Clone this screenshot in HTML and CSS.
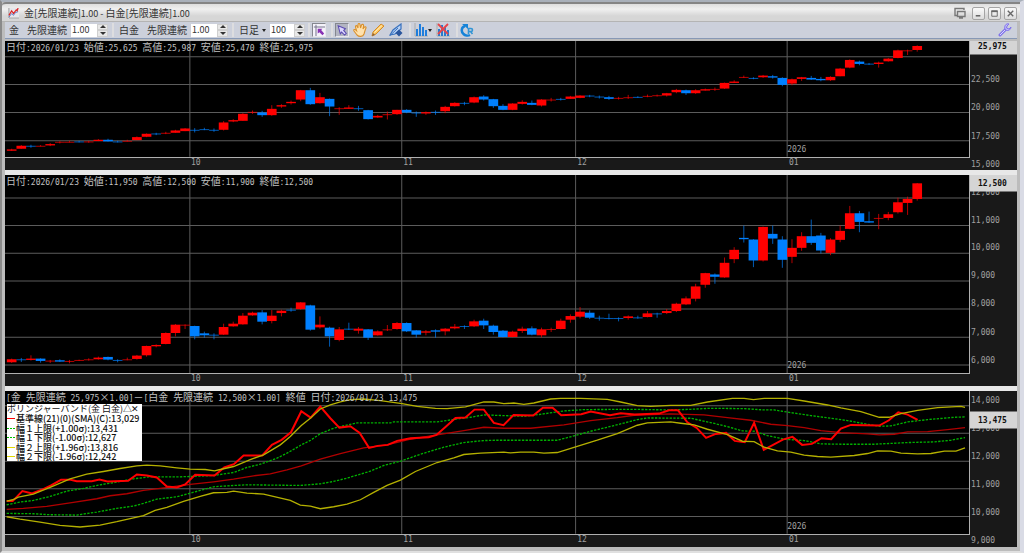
FILE: index.html
```html
<!DOCTYPE html>
<html lang="ja">
<head>
    <meta charset="UTF-8">
    <meta name="viewport" content="width=device-width, initial-scale=1.0">
    <title>金[先限連続]1.00 - 白金[先限連続]1.00</title>
    <link rel="stylesheet" href="styles.css">
</head>
<body>
    <div class="window">
        <header class="title-bar">
            <svg class="app-icon" viewBox="0 0 12 12" aria-hidden="true">
                <path d="M0 0H12V12H0Z" fill="#e6e6ea"/>
                <path d="M1 0V11H12" fill="none" stroke="#999" stroke-width="1"/>
                <path d="M1 10L4 6L6 8L8 5L11 4" fill="none" stroke="#5577cc" stroke-width="1"/>
                <path d="M1 8L4 3L6 6L9 2L10 3L11 0" fill="none" stroke="#dd2222" stroke-width="1.3"/>
            </svg>
            <h1>金[先限連続]<span>1.00 - </span>白金[先限連続]<span>1.00</span></h1>
            <button class="float-button" aria-label="切り離し">
                <svg viewBox="0 0 12 12"><path d="M3 8.500H1V1.500H10V3M3.500 4.500H11V9.500H3.500ZM5 11H9" fill="none" stroke="#777" stroke-width="1.400"/></svg>
            </button>
            <div class="window-buttons">
                <button aria-label="最小化"><svg viewBox="0 0 12 12"><path d="M3 8.500H8" stroke="#555" stroke-width="1.500"/></svg></button>
                <button aria-label="最大化"><svg viewBox="0 0 12 12"><path d="M3 3.500H9V9H3Z" fill="none" stroke="#666" stroke-width="1"/><path d="M2.500 3.500H9.500" stroke="#666" stroke-width="2"/></svg></button>
                <button aria-label="閉じる"><svg viewBox="0 0 12 12"><path d="M3 3L9 9M9 3L3 9" stroke="#666" stroke-width="1.500"/></svg></button>
            </div>
        </header>

        <div class="toolbar">
            <div class="tool-group">
                <span>金</span>
                <label for="goldRate">先限連続</label>
                <span class="spin-box">
                    <input type="text" id="goldRate" value="1.00">
                    <span class="spin"><button aria-label="増やす" class="up"></button><button aria-label="減らす" class="down"></button></span>
                </span>
            </div>
            <div class="tool-group">
                <span>白金</span>
                <label for="platinumRate">先限連続</label>
                <span class="spin-box">
                    <input type="text" id="platinumRate" value="1.00">
                    <span class="spin"><button aria-label="増やす" class="up"></button><button aria-label="減らす" class="down"></button></span>
                </span>
            </div>
            <div class="tool-group period-group">
                <span class="period"><select aria-label="足種"><option>日足</option></select></span>
                <span class="spin-box short">
                    <input type="text" aria-label="本数" value="100">
                    <span class="spin"><button aria-label="増やす" class="up"></button><button aria-label="減らす" class="down"></button></span>
                </span>
            </div>
            <div class="tool-group icon-group">
                <button class="tool pressed" aria-label="座標表示">
                    <svg viewBox="0 0 14 14"><path d="M0 0H14V14H0Z" fill="#f4f2fa"/><path d="M3.500 1V14M1 3.500H14" stroke="#77778c" stroke-width="1.200"/><path d="M5.500 5.500H11L9.500 7L13 11L11 13L7.500 9.500L5.500 11Z" fill="#8833b4"/></svg>
                </button>
            </div>
            <div class="tool-group tools">
                <button class="tool pressed" aria-label="選択">
                    <svg viewBox="0 0 14 14"><path d="M2.500 2L11 5.500L9 7.500L12 11L10 13L6.500 9.500L5 11.500Z" fill="#dcd6ff" stroke="#5c4cb0" stroke-width="1.200"/></svg>
                </button>
                <button class="tool" aria-label="移動">
                    <svg viewBox="0 0 14 14"><path d="M4 12L1 8C0 6 2 6 3.500 7.500L2.500 4C2.500 2 4 2 5 5L5 2C5 0 7 0 7 2L7.500 5L8.500 2C9 1 11 1 10.500 3L10 6L11.500 4C13 3 13.500 5 12.500 6L11 11C10 14 6 14 4 12Z" fill="#ffe2ae" stroke="#d9902c" stroke-width="1.100"/></svg>
                </button>
                <button class="tool" aria-label="描画">
                    <svg viewBox="0 0 14 14"><path d="M1 13L2 9L10 1L13 3L5 11Z" fill="#ffc862" stroke="#d18b2d" stroke-width="1"/><path d="M3.500 9.500L11 2.500" stroke="#fff0c0" stroke-width="1"/><path d="M1 13L2 10L4 12Z" fill="#8b6238"/></svg>
                </button>
                <button class="tool" aria-label="描画設定">
                    <svg viewBox="0 0 14 14"><path d="M1 12L4 7L12 1V6L6 11Z" fill="#b7d1f4" stroke="#3971be" stroke-width="1.200"/><path d="M1 12.500L9 5" stroke="#3971be" stroke-width="1"/><path d="M10 6.500L13.500 10L10 13.500L6.500 10Z" fill="#2a559c"/></svg>
                </button>
            </div>
            <div class="tool-group chart-tools">
                <button class="tool menu-tool" aria-label="チャート種類">
                    <svg viewBox="0 0 14 14"><path d="M1 0V13H14" fill="none" stroke="#aaa" stroke-width="1"/><path d="M3 6V13M6 1V13M9 4V13M12 7V13" stroke="#207edc" stroke-width="2"/></svg>
                </button>
                <button class="tool" aria-label="チャート削除">
                    <svg viewBox="0 0 14 14"><path d="M1 0V13H14" fill="none" stroke="#aaa" stroke-width="1"/><path d="M3 6V13M6 2V13M9 4V13M12 7V13" stroke="#277bd0" stroke-width="2"/><path d="M2 1L12 11M12 1L2 11" stroke="#e7444a" stroke-width="1.800"/></svg>
                </button>
            </div>
            <div class="tool-group reload">
                <button class="tool" aria-label="更新">
                    <svg viewBox="0 0 14 14"><path d="M5 3C1 4 1 9 3.500 11C5 12.500 8 13 10 12" fill="none" stroke="#1683d8" stroke-width="2.500"/><path d="M2 1H8V6Z" fill="#1683d8"/><path d="M8.500 11V5.500H11C13 5.500 13 8.500 11 8.500H9M10.500 8.500L12.500 11" fill="none" stroke="#3295d5" stroke-width="1.600"/></svg>
                </button>
            </div>
            <button class="tool settings" aria-label="設定">
                <svg viewBox="0 0 14 14"><path d="M2 12L8 6" stroke="#8174ea" stroke-width="3" stroke-linecap="round"/><path d="M2 12L8 6" stroke="#d8d2ff" stroke-width="1"/><path d="M11 1C8 0 6 3 7 6C9 9 13 7 13 4L11 6L8.500 5L9 3Z" fill="#c5bdff" stroke="#8174ea" stroke-width="1"/></svg>
            </button>
        </div>

        <main class="charts">
            <section class="panel panel-gold" id="goldPanel">
                <div class="plot">
                    <svg class="drawing" viewBox="0 0 2889 348" preserveAspectRatio="none"></svg>
                    <p class="quote">日付<span>:2026/01/23 </span>始値<span>:25,625 </span>高値<span>:25,987 </span>安値<span>:25,470 </span>終値<span>:25,975</span></p>
                </div>
                <div class="axis"></div>
                <div class="months"></div>
            </section>
            <section class="panel panel-platinum" id="platinumPanel">
                <div class="plot">
                    <svg class="drawing" viewBox="0 0 2889 597" preserveAspectRatio="none"></svg>
                    <p class="quote">日付<span>:2026/01/23 </span>始値<span>:11,950 </span>高値<span>:12,500 </span>安値<span>:11,900 </span>終値<span>:12,500</span></p>
                </div>
                <div class="axis"></div>
                <div class="months"></div>
            </section>
            <section class="panel panel-spread" id="spreadPanel">
                <div class="plot">
                    <svg class="drawing" viewBox="0 0 2889 429" preserveAspectRatio="none"></svg>
                    <p class="quote"><span>[</span>金<span> </span>先限連続<span> 25,975</span>×<span>1.00]</span>－<span>[</span>白金<span> </span>先限連続<span> 12,500</span>×<span>1.00] </span>終値<span> </span>日付<span>:2026/01/23 13,475</span></p>
                    <div class="legend">
                        <div class="legend-title">ボリンジャーバンド(金 白金)<button aria-label="折りたたむ">△</button><button aria-label="閉じる">✕</button></div>
                        <div class="legend-row base">基準線(21)(0)(SMA)(C):13,029</div>
                        <div class="legend-row band1">幅１上限(+1.00σ):13,431</div>
                        <div class="legend-row band1">幅１下限(-1.00σ):12,627</div>
                        <div class="legend-row band2">幅２上限(+1.96σ):13,816</div>
                        <div class="legend-row band2">幅２下限(-1.96σ):12,242</div>
                    </div>
                </div>
                <div class="axis"></div>
                <div class="months"></div>
            </section>
        </main>
    </div>
    <script src="charts.js"></script>
</body>
</html>
```

FILE: styles.css
```css
* {
    box-sizing: border-box;
}
html, body {
    height: 100%;
    margin: 0;
}
body {
    background-color: #d9dbe5;
    font-family: "Noto Sans CJK JP", "Liberation Sans", sans-serif;
    font-size: 10px;
    color: #333333;
}
button, input, select {
    font: inherit;
    color: inherit;
    margin: 0;
    padding: 0;
    border: none;
    background: none;
}
.window {
    display: flex;
    flex-direction: column;
    height: 100%;
    min-height: 400px;
    border-top: 2px solid #a9b0ba;
    border-right: 4px solid #d9dbe5;
    border-bottom: 2px solid #e0e0e0;
    border-left: 2px solid #8a8a8a;
    background-color: #bcbcbc;
}

/* Title bar */
.title-bar {
    display: flex;
    align-items: center;
    height: 20px;
    padding: 1px 3px 0 6px;
    border-top: 2px solid #858585;
    border-bottom: 1px solid #b4b4b4;
    border-radius: 4px 0 0 0;
    background: linear-gradient(#dedede, #f0f0f0 30%, #d6d6d6 70%);
}
.app-icon {
    width: 11px;
    height: 11px;
}
.title-bar h1 {
    flex: 1;
    margin: 0 0 0 5px;
    font-size: 10px;
    line-height: 14px;
    font-weight: normal;
    white-space: nowrap;
}
.title-bar h1 span {
    font-size: 9px;
}
.title-bar svg {
    display: block;
}
.float-button {
    width: 12px;
    height: 12px;
    margin-right: 6px;
}
.window-buttons {
    display: flex;
    gap: 3px;
}
.window-buttons button {
    width: 13px;
    height: 13px;
    border: 1px solid #a4a4a4;
    border-radius: 2px;
    background: linear-gradient(#fafafa, #dcdcdc);
}

/* Toolbar */
.toolbar {
    display: flex;
    align-items: center;
    height: 17px;
    margin: 0 3px 2px;
    padding-left: 4px;
    border-bottom: 1px solid #8798b5;
    background-color: #ccd0db;
    line-height: 14px;
    white-space: nowrap;
}
.tool-group {
    display: flex;
    align-items: center;
    gap: 4px;
    padding-right: 4px;
    margin-right: 5px;
    border-right: 2px solid #dddddf;
}
.tool-group label {
    margin-left: 4px;
}
.spin-box {
    display: flex;
    width: 37px;
    height: 13px;
    background-color: #ffffff;
}
.spin-box.short {
    width: 35px;
}
.spin-box input {
    flex: 1;
    min-width: 0;
    padding: 0 0 1px 1px;
    font-size: 9px;
    line-height: 12px;
}
.spin {
    display: flex;
    flex-direction: column;
    width: 11px;
    background-color: #e8e8e8;
}
.spin button {
    flex: 1;
    border: 1px solid #cfcfcf;
}
.spin button::before {
    content: "";
    display: block;
    width: 0;
    margin: 0 auto;
    border: 3px solid transparent;
}
.spin .up::before {
    border-top: none;
    border-bottom-color: #333333;
}
.spin .down::before {
    border-bottom: none;
    border-top-color: #333333;
}
.period {
    display: flex;
    align-items: center;
    gap: 3px;
}
.period select {
    appearance: none;
    width: 20px;
    height: 14px;
}
.period::after, .menu-tool::after {
    content: "";
    border: 2px solid transparent;
    border-top: 3px solid #222222;
    border-bottom: none;
}
.tool {
    display: flex;
    align-items: center;
    width: 14px;
    height: 14px;
}
.tool svg {
    display: block;
    width: 100%;
    height: 100%;
}
.pressed {
    border: 1px solid #8a8c94;
    border-color: #85878f #e8e8ec #e8e8ec #85878f;
    background-color: #b3b5c2;
}
.period-group {
    padding-right: 3px;
    margin-right: 2px;
}
.icon-group {
    padding-right: 5px;
    margin-right: 2px;
}
.tools {
    padding-right: 6px;
    margin-right: 3px;
}
.chart-tools {
    padding-right: 6px;
    margin-right: 2px;
}
.menu-tool {
    width: 18px;
}
.menu-tool svg {
    width: 14px;
    flex: none;
}
.reload {
    border-right: none;
}
.settings {
    margin-left: auto;
    margin-right: 5px;
}

/* Chart panels */
.charts {
    flex: 1;
    display: flex;
    flex-direction: column;
    gap: 5px;
    min-height: 0;
    margin: 0 3px 4px;
    background: #e8e8e8;
}
.panel {
    display: grid;
    grid-template-columns: 1fr 47px;
    grid-template-rows: 1fr 12px;
    min-height: 0;
    overflow: hidden;
    background-color: #191919;
    color: #a0a0a0;
    font-family: "DejaVu Sans Mono", "Noto Sans CJK JP", monospace;
    font-size: 8px;
    line-height: 11px;
}
.panel-gold {
    flex: 129;
}
.panel-platinum {
    flex: 212;
}
.panel-spread {
    flex: 156;
}
.plot {
    position: relative;
    min-height: 0;
    border-right: 1px solid #b0b0b0;
    border-bottom: 1px solid #b0b0b0;
    background-color: #000000;
}
.drawing {
    position: absolute;
    width: 100%;
    height: 100%;
}
.quote {
    position: absolute;
    top: 0;
    left: 1px;
    margin: 0;
    color: #c0c0c0;
    font-family: "Noto Sans CJK JP", sans-serif;
    font-size: 10px;
    white-space: pre;
}
.quote span {
    font-family: "DejaVu Sans Mono", monospace;
    font-size: 8px;
}
.year {
    position: absolute;
    bottom: 2px;
}
.axis, .months {
    position: relative;
}
.tick {
    position: absolute;
    left: 1px;
    transform: translateY(-100%);
}
.price {
    position: absolute;
    left: 0;
    right: 0;
    padding-left: 8px;
    transform: translateY(-50%);
    background-color: #d5d5d5;
    color: #111111;
    font-weight: bold;
    line-height: 17px;
}
.month {
    position: absolute;
    top: -1px;
    padding-left: 1px;
}

/* Lines and candles */
.grid-line {
    stroke: #5c5c5c;
    stroke-width: 3;
    shape-rendering: crispEdges;
}
.up-day {
    fill: #ff0000;
}
.down-day {
    fill: #0080ff;
}
.wick {
    opacity: 0.7;
}
.line {
    fill: none;
    stroke-width: 4;
}
.line.spread {
    stroke: #ff0000;
    stroke-width: 6;
}
.line.base {
    stroke: #b00000;
}
.line.band1 {
    stroke: #00b000;
    stroke-dasharray: 7 4;
}
.line.band2 {
    stroke: #b4b000;
}

/* Legend */
.legend {
    position: absolute;
    top: 13px;
    left: 2px;
    display: flex;
    flex-direction: column;
    justify-content: space-between;
    width: 135px;
    height: 57px;
    overflow: hidden;
    background-color: #ffffff;
    color: #111111;
    font-family: "Noto Sans CJK JP", sans-serif;
    font-size: 9px;
    font-weight: 500;
    line-height: 9px;
    white-space: nowrap;
}
.legend-title {
    display: flex;
    font-weight: normal;
}
.legend-title button {
    width: 8px;
    text-align: center;
}
.legend-row {
    display: flex;
    align-items: center;
}
.legend-row::before {
    content: "";
    width: 8px;
    height: 1px;
    margin-right: 1px;
    background-color: #ff0000;
}
.legend-row.band1::before {
    background: repeating-linear-gradient(90deg, #00c000 0 2px, #ffffff 2px 3px);
}
.legend-row.band2::before {
    background-color: #e0d800;
}
```

FILE: charts.js
```js
// Candles: r = up day, b = down day, then high, body top, body bottom, low
const gold = `
r324,326,330,330 r313,315,324,324 b312,315,317,321 r313,315,317,317 r307,310,314,316
r301,303,306,308 r300,303,305,305 b300,302,304,305 r300,302,304,306 r295,297,301,301
b294,297,302,302 b300,302,305,305 r297,300,302,302 r287,289,298,298 r278,279,288,289
b276,278,281,283 r273,276,278,280 r267,269,276,276 r262,263,271,271 b262,267,269,275
b261,265,267,268 b263,267,269,273 r241,245,267,269 r235,238,242,244 r217,219,240,240
r209,213,215,219 b210,215,223,228 r193,204,223,225 r190,193,197,201 r179,183,187,191
r147,148,176,181 b141,148,190,192 r156,169,187,188 b173,174,197,226 r199,202,205,222
r193,200,204,204 b195,202,204,210 b207,208,235,236 r222,225,230,231 r212,220,223,236
r207,207,220,222 b205,207,215,217 b212,215,217,228 r212,214,218,222 b209,213,215,222
r195,198,211,217 r184,186,196,197 b183,186,188,193 r167,169,185,187 b163,167,176,179
b174,175,196,201 b190,195,207,208 r187,188,207,208 r178,183,189,191 b179,186,192,193
r175,176,194,197 r171,176,178,182 b171,174,176,179 r165,167,174,174 r163,164,171,172
b162,164,167,169 b164,167,169,173 b165,169,174,177 r168,171,174,176 r162,169,171,174
b166,168,170,171 r161,165,168,169 r161,163,165,167 r156,157,164,167 r144,147,154,157
b146,148,157,162 r145,148,157,159 r143,145,149,149 r140,144,147,150 r125,126,143,144
r118,122,126,126 r104,108,110,111 b109,111,114,115 r102,104,109,111 b102,106,110,113
b109,111,132,136 r113,115,128,133 r108,109,114,120 b105,111,116,117 b108,114,118,121
r106,108,118,120 r81,83,106,106 r55,57,80,82 b59,62,69,73 b66,68,71,72
r62,65,69,80 r51,53,61,62 r26,28,51,52 r26,28,30,42 r13,15,27,32`;

const platinum = `
r552,554,563,565 b550,554,557,562 r542,552,556,558 b551,552,559,564 r556,558,561,565
b554,557,561,562 r556,559,561,566 r555,556,558,559 r551,554,557,558 r546,549,554,555
b546,547,555,557 b554,556,559,563 r549,554,556,557 r541,543,553,555 r513,514,542,546
r509,511,515,518 r473,475,508,509 r448,450,475,485 r449,450,453,463 b453,454,485,494
b471,476,482,489 b476,480,482,494 r447,457,480,481 r441,447,455,456 r415,423,449,450
r411,414,422,423 b406,413,441,449 r406,423,439,446 r405,408,415,425 b399,405,407,411
r382,383,403,405 b390,392,465,468 r425,450,458,462 b456,459,485,516 r457,464,496,500
b444,462,464,466 r457,462,468,477 b463,464,489,496 r467,470,482,483 r451,464,467,469
r442,445,463,465 b443,445,470,472 b466,467,480,489 r466,470,474,482 b464,467,471,489
r460,462,470,482 r448,456,461,464 b452,454,456,463 r435,440,455,457 b432,438,452,463
b450,453,472,480 b466,468,487,488 r468,471,487,488 r456,462,469,475 b455,461,480,482
r459,464,482,488 r459,463,465,472 r432,438,463,464 r419,424,435,444 r397,411,426,431
b407,414,429,433 b423,429,431,438 b417,430,432,434 b428,430,432,440 r422,425,430,435
b423,428,431,432 r409,416,427,428 b414,416,418,429 r403,409,415,418 r384,387,409,412
r365,371,389,391 r327,335,372,380 r294,295,330,339 b296,299,306,327 r248,264,308,309
r217,225,253,265 b152,189,193,203 b193,194,257,277 r155,156,257,260 b152,177,191,207
b184,194,255,279 r193,219,246,265 r172,184,219,228 b134,184,204,210 b174,182,227,236
r190,194,234,241 r152,168,195,202 r93,115,162,163 b108,115,141,172 b110,139,143,144
r117,129,132,163 r111,118,129,136 r68,82,112,116 r65,72,84,120 r24,25,72,77`;

const bands = [
    ["base", "5,356 55,353 125,347 205,335 275,324 315,315 365,309 415,299 465,293 555,281 625,273 685,265 745,255 795,249 845,237 888,225 945,205 1005,188 1075,171 1145,162 1215,145 1295,132 1375,119 1435,109 1495,112 1575,112 1675,102 1755,89 1835,80 1885,73 1995,69 2095,72 2165,80 2235,88 2295,100 2345,104 2395,110 2445,119 2505,125 2585,129 2620,132 2665,130 2705,123 2765,122 2825,116 2877,110"],
    ["band1", "5,342 45,334 85,329 135,317 185,301 235,293 285,282 335,274 385,264 435,258 525,258 555,257 625,254 685,245 725,230 765,220 815,202 845,187 888,162 916,148 945,128 985,112 1005,107 1055,96 1155,96 1165,93 1295,93 1355,84 1395,79 1435,72 1495,74 1555,76 1605,70 1675,60 1735,56 1875,55 1995,57 2055,55 2115,52 2215,53 2275,57 2305,57 2355,65 2415,74 2475,82 2525,89 2585,100 2620,106 2655,105 2705,93 2765,86 2845,79 2877,78"],
    ["band1", "5,368 85,369 135,372 215,373 275,364 335,353 385,346 415,338 455,325 515,318 585,299 625,288 685,284 725,282 885,284 945,279 985,272 1025,262 1095,241 1135,224 1189,210 1245,190 1315,169 1375,155 1435,149 1475,148 1655,148 1705,135 1755,121 1825,104 1895,86 1925,81 2055,82 2115,95 2165,107 2210,120 2245,121 2285,134 2335,145 2395,149 2445,159 2505,160 2605,160 2705,155 2785,153 2835,148 2877,140"],
    ["spread", "5,331 23,331 52,301 81,308 110,297 138,284 168,267 197,267 215,271 260,271 283,266 307,272 369,270 395,251 425,254 455,260 485,287 515,290 540,281 570,252 628,254 657,230 686,220 715,194 771,194 800,162 829,147 857,124 888,61 916,80 945,47 975,82 1002,110 1035,106 1063,126 1091,171 1117,165 1147,162 1175,150 1215,142 1270,139 1293,132 1320,108 1350,81 1380,80 1407,56 1435,56 1465,96 1494,103 1524,72 1553,73 1583,74 1612,50 1641,50 1667,73 1727,70 1755,62 1813,73 1845,67 1887,71 1960,68 1990,58 2017,58 2045,94 2073,111 2101,141 2130,129 2161,126 2187,150 2217,154 2245,96 2274,177 2331,146 2360,138 2389,162 2418,159 2447,142 2476,145 2505,113 2535,102 2620,104 2649,88 2677,64 2705,71 2735,87"],
    ["band2", "5,331 23,327 40,319 85,310 135,290 195,264 245,250 295,242 345,233 395,225 425,223 465,225 515,231 555,235 600,236 628,240 645,236 685,227 735,206 775,192 825,162 855,137 888,104 916,81 945,54 975,42 1005,33 1035,26 1075,24 1125,29 1190,38 1235,46 1290,52 1325,53 1380,48 1435,33 1465,33 1495,38 1525,36 1555,40 1585,36 1635,24 1665,22 1725,22 1805,25 1845,33 1895,44 1935,46 1995,43 2055,43 2105,33 2180,22 2215,22 2243,26 2275,22 2345,22 2395,30 2465,42 2505,51 2565,62 2620,79 2649,79 2685,68 2735,58 2795,50 2865,46 2877,49"],
    ["band2", "5,378 45,385 105,394 165,404 225,409 285,403 335,393 415,375 450,359 485,350 535,332 585,317 625,306 665,305 685,301 725,307 775,310 855,329 885,343 915,346 945,354 985,348 1025,340 1065,327 1105,305 1145,284 1185,268 1230,242 1295,215 1345,201 1375,191 1425,187 1495,184 1515,186 1545,184 1585,184 1615,187 1655,185 1710,168 1775,148 1835,128 1895,103 1925,96 1995,93 2025,97 2065,102 2105,115 2165,131 2210,151 2245,152 2275,169 2315,180 2355,184 2395,193 2435,197 2475,199 2545,194 2585,188 2615,180 2655,181 2685,187 2735,189 2775,188 2815,181 2850,181 2877,171"]
];

const WIDTH = 2889;
const months = [["10", 554], ["11", 1189], ["12", 1710], ["01", 2344]];

function candles(data) {
    return data.trim().split(/\s+/).map((item, i) => {
        const cls = item[0] === "r" ? "up-day" : "down-day";
        const [high, top, bottom, low] = item.slice(1).split(",").map(Number);
        const x = 20 + i * 28.87;
        const thin = bottom - top < 4 ? " wick" : "";
        return `<rect class="${cls} wick" x="${x - 1.5}" y="${high}" width="3" height="${low - high}"/>` +
            `<rect class="${cls}${thin}" x="${x - 14.5}" y="${top}" width="29" height="${Math.max(bottom - top, 3)}"/>`;
    }).join("");
}

function lines() {
    return bands.map(([cls, points]) => `<polyline class="line ${cls}" points="${points}"/>`).join("");
}

// ticks: [label, y]; a tick without a label is only a grid line
function drawPanel(id, height, ticks, price, priceY, content) {
    const panel = document.getElementById(id);
    const plot = panel.querySelector(".plot");
    const axis = panel.querySelector(".axis");
    const rows = ticks.map(([, y]) => `<path class="grid-line" d="M0 ${y}H${WIDTH}"/>`).join("");
    const cols = months.map(([, x]) => `<path class="grid-line" d="M${x} 0V${height}"/>`).join("");
    panel.querySelector(".drawing").innerHTML = rows + cols + content;

    axis.innerHTML = ticks.filter(([label]) => label).map(([label, y]) =>
        `<span class="tick" style="top:${y / height * 100}%">${label}</span>`).join("") +
        `<span class="price" style="top:${priceY / height * 100}%">${price}</span>`;

    panel.querySelector(".months").innerHTML = months.map(([label, x]) =>
        `<span class="month" style="left:${x / WIDTH * 100}%">${label}</span>`).join("");
    plot.insertAdjacentHTML("beforeend", `<span class="year" style="left:${2344 / WIDTH * 100}%">2026</span>`);
}

drawPanel("goldPanel", 348,
    [["", 47], ["22,500", 131], ["20,000", 215], ["17,500", 300], ["15,000", 384]],
    "25,975", 15, candles(gold));
drawPanel("platinumPanel", 597,
    [["12,000", 69], ["11,000", 152], ["10,000", 235], ["9,000", 319], ["8,000", 403], ["7,000", 488], ["6,000", 571]],
    "12,500", 25, candles(platinum));
drawPanel("spreadPanel", 429,
    [["14,000", 44], ["13,000", 127], ["12,000", 211], ["11,000", 294], ["10,000", 377], ["9,000", 461]],
    "13,475", 87, lines());
```
